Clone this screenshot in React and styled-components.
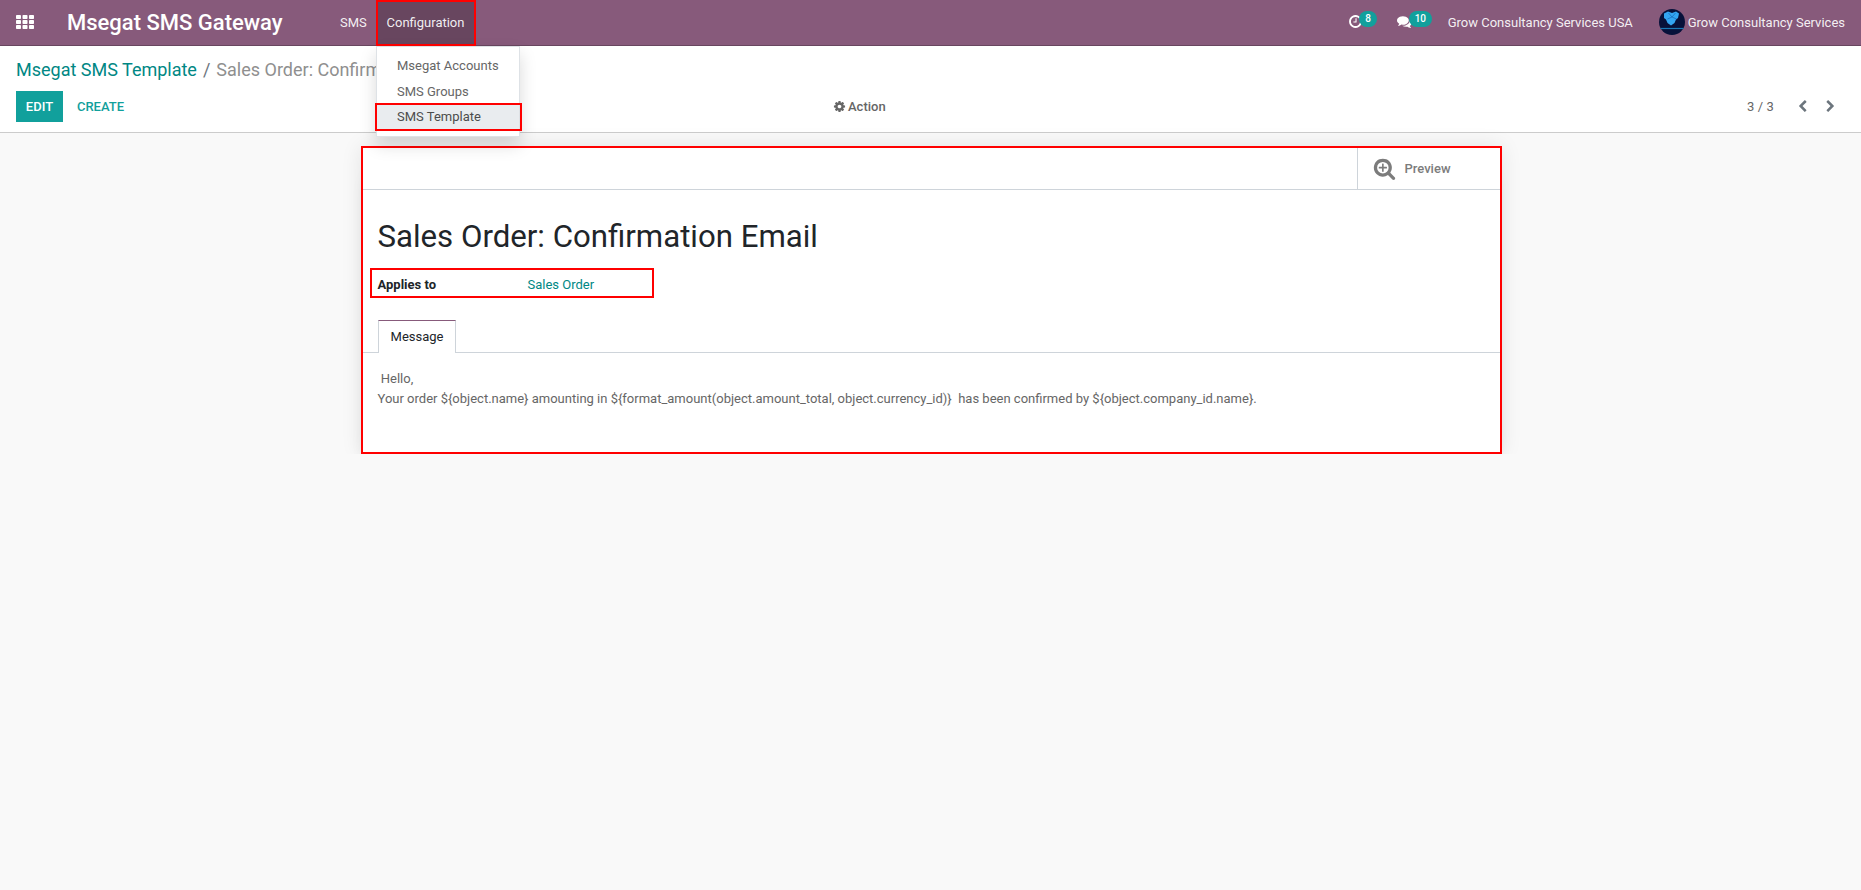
import React from "react";
import styled, { createGlobalStyle, css } from "styled-components";

const Global = createGlobalStyle`
  *, *::before, *::after { box-sizing: border-box; }
  body {
    margin: 0;
    background: #f9f9f9;
    font: 13px/19.5px Roboto, "Liberation Sans", sans-serif;
    color: #666;
  }
  h1 { margin: 0; }
`;

const frame = css`border: 2px solid #ff0000;`;

const Navbar = styled.header`
  display: flex;
  height: 46px;
  background: #875a7b;
  border-bottom: 1px solid #68465f;
  color: #fff;
  line-height: 45px;
  white-space: nowrap;
`;
const AppsIcon = styled.svg`
  margin: 15px 0 0 16px;
  width: 18px;
  height: 14px;
  fill: #fff;
`;
const Brand = styled.div`
  width: 261px;
  margin-left: 33px;
  font-size: 22px;
  font-weight: 500;
`;
const MenuLink = styled.div`
  width: 48px;
  padding-left: 12px;
  color: rgba(255, 255, 255, 0.92);
`;
const MenuHolder = styled.div`
  position: relative;
  width: 100px;
  height: 45px;
`;
const ActiveMenu = styled.div`
  ${frame}
  height: 46px;
  padding-left: 8.5px;
  line-height: 42px;
  background: #68465f;
  color: rgba(255, 255, 255, 0.92);
`;
const Dropdown = styled.ul`
  position: absolute;
  z-index: 2;
  top: 46px;
  left: 0;
  width: 144px;
  height: 91px;
  margin: 0;
  padding: 6px 0;
  list-style: none;
  background: #fff;
  border: 1px solid #dee2e6;
  box-shadow: 0 8px 16px rgba(0, 0, 0, 0.15);
`;
const DropdownItem = styled.li`
  position: relative;
  height: 25.5px;
  padding: 3px 20px;
  line-height: 19.5px;
  color: ${(p) => (p.$active ? "#4c4c4c" : "#666")};
  background: ${(p) => (p.$active ? "#e9ecef" : "transparent")};
  ${(p) =>
    p.$active &&
    css`
      &::after {
        content: "";
        ${frame}
        position: absolute;
        top: -1px;
        left: -2px;
        right: -3px;
        height: 28px;
      }
    `}
`;
const Systray = styled.div`
  display: flex;
  margin-left: auto;
  padding-right: 16px;
  color: rgba(255, 255, 255, 0.92);
`;
const Notice = styled.div`
  display: flex;
  width: ${(p) => p.$width}px;
  svg { margin-top: 14px; flex: none; color: #fff; }
`;
const Badge = styled.span`
  position: relative;
  height: 16px;
  margin: 11px 0 0 ${(p) => p.$overlap}px;
  padding: 0 6px;
  border-radius: 8px;
  background: #11a09c;
  color: #fff;
  font-size: 10px;
  font-weight: 500;
  line-height: 16px;
`;
const Company = styled.div`
  width: 211px;
`;
const Avatar = styled.svg`
  width: 26px;
  height: 26px;
  margin: 9px 3px 0 0;
`;

const ControlPanel = styled.section`
  height: 87px;
  padding: 13px 16px 0;
  background: #fff;
  border-bottom: 1px solid #ccc;
`;
const Breadcrumb = styled.nav`
  display: flex;
  gap: 6px;
  height: 32px;
  font-size: 18px;
  line-height: 22px;
  color: #6c757d;
  white-space: nowrap;
  a { color: #008784; }
  span { color: #8f8f8f; }
`;
const Toolbar = styled.div`
  display: grid;
  grid-template-columns: 817px 1fr auto;
  height: 31px;
  line-height: 31px;
`;
const Buttons = styled.div`
  display: flex;
`;
const Button = styled.button`
  height: 31px;
  width: ${(p) => (p.$primary ? "47px" : "75px")};
  padding: 0;
  border: 0;
  font: 500 13px/31px Roboto, sans-serif;
  background: ${(p) => (p.$primary ? "#11a09c" : "transparent")};
  color: ${(p) => (p.$primary ? "#fff" : "#11a09c")};
`;
const Action = styled.div`
  display: flex;
  align-items: center;
  gap: 2px;
  font-weight: 500;
`;
const Pager = styled.div`
  display: flex;
  align-items: center;
  padding-right: 8px;
  span { margin-right: 22px; letter-spacing: 0.1px; }
  svg + svg { margin-left: 15px; }
  svg { color: #6c757d; }
`;

const Sheet = styled.main`
  ${frame}
  width: 1141px;
  height: 308px;
  margin: 13px 0 0 361px;
  background: #fff;
  box-shadow: 0 20px 20px -15px rgba(0, 0, 0, 0.32), 0 0 20px rgba(0, 0, 0, 0.09);
`;
const ButtonBox = styled.div`
  display: flex;
  justify-content: flex-end;
  height: 42px;
  border-bottom: 1px solid #ced4da;
`;
const StatButton = styled.div`
  display: flex;
  align-items: center;
  width: 143px;
  padding-left: 15px;
  gap: 8.5px;
  border-left: 1px solid #ced4da;
  color: #7c7c7c;
  font-weight: 500;
`;
const Title = styled.h1`
  margin: 28px 0 0 14.5px;
  color: #212529;
  font-size: 31.2px;
  font-weight: 400;
  line-height: 38px;
`;
const Field = styled.div`
  ${frame}
  display: flex;
  width: 284px;
  height: 30px;
  margin: 12px 0 0 7px;
  padding: 1px 0 0 5.5px;
  line-height: 28px;
  color: #008784;
  b { width: 150px; color: #212529; font-weight: 700; }
`;
const Tabs = styled.div`
  display: flex;
  height: 33px;
  margin-top: 22px;
  padding-left: 15px;
  border-bottom: 1px solid #ced4da;
`;
const Tab = styled.div`
  width: 78px;
  height: 33px;
  border: 1px solid #ced4da;
  border-top-color: #875a7b;
  border-bottom: 0;
  background: #fff;
  color: #212529;
  line-height: 32px;
  text-align: center;
`;
const Message = styled.p`
  margin: 16px 14.5px 0;
  line-height: 20px;
  white-space: pre;
`;

const Icon = ({ d, size }) => (
  <svg width={size} height={size} viewBox="0 0 1792 1792" fill="currentColor">
    <path d={d} />
  </svg>
);

const clock =
  "M1024 544v448q0 14-9 23t-23 9h-320q-14 0-23-9t-9-23v-64q0-14 9-23t23-9h224v-352q0-14 9-23t23-9h64q14 0 23 9t9 23zm416 352q0-148-73-273t-198-198-273-73-273 73-198 198-73 273 73 273 198 198 273 73 273-73 198-198 73-273zm224 0q0 209-103 385.5t-279.5 279.5-385.5 103-385.5-103-279.5-279.5-103-385.5 103-385.5 279.5-279.5 385.5-103 385.5 103 279.5 279.5 103 385.5z";
const comments =
  "M1408 768q0 139-94 257t-256.5 186.5-353.5 68.5q-86 0-176-16-124 88-278 128-36 9-86 16h-3q-11 0-20.5-8t-11.5-21q-1-3-1-6.5t.5-6.5 2-6l2.5-5 3.5-5.5 4-5 4.5-5 4-4.5q5-6 23-25t26-29.5 22.5-29 25-38.5 20.5-44q-124-72-195-177t-71-224q0-139 94-257t256.5-186.5 353.5-68.5 353.5 68.5 256.5 186.5 94 257zm384 256q0 120-71 224.5t-195 176.5q10 24 20.5 44t25 38.5 22.5 29 26 29.5 23 25q1 1 4 4.5t4.5 5 4 5 3.5 5.5l2.5 5 2 6 .5 6.5-1 6.5q-3 14-13 22t-22 7q-50-7-86-16-154-40-278-128-90 16-176 16-271 0-472-132 58 4 88 4 161 0 309-45t264-129q125-92 192-212t67-254q0-77-23-152 129 71 204 178t75 230z";
const cog =
  "M1152 896q0-106-75-181t-181-75-181 75-75 181 75 181 181 75 181-75 75-181zm512-109v222q0 12-8 23t-20 13l-185 28q-19 54-39 91 35 50 107 138 10 12 10 25t-9 23q-27 37-99 108t-94 71q-12 0-26-9l-138-108q-44 23-91 38-16 136-29 186-7 28-36 28h-222q-14 0-24.5-8.5t-11.5-21.5l-28-184q-49-16-90-37l-141 107q-10 9-25 9-14 0-25-11-126-114-165-168-7-10-7-23 0-12 8-23 15-21 51-66.5t54-70.5q-27-50-41-99l-183-27q-13-2-21-12.5t-8-23.5v-222q0-12 8-23t19-13l186-28q14-46 39-92-40-57-107-138-10-12-10-24 0-10 9-23 26-36 98.5-107.5t94.5-71.5q13 0 26 10l138 107q44-23 91-38 16-136 29-186 7-28 36-28h222q14 0 24.5 8.5t11.5 21.5l28 184q49 16 90 37l142-107q9-9 24-9 13 0 25 10 129 119 165 170 7 8 7 22 0 12-8 23-15 21-51 66.5t-54 70.5q26 50 41 98l183 28q13 2 21 12.5t8 23.5z";
const searchPlus =
  "M1088 800v64q0 13-9.5 22.5t-22.5 9.5h-224v224q0 13-9.5 22.5t-22.5 9.5h-64q-13 0-22.5-9.5t-9.5-22.5v-224h-224q-13 0-22.5-9.5t-9.5-22.5v-64q0-13 9.5-22.5t22.5-9.5h224v-224q0-13 9.5-22.5t22.5-9.5h64q13 0 22.5 9.5t9.5 22.5v224h224q13 0 22.5 9.5t9.5 22.5zm128 32q0-185-131.5-316.5t-316.5-131.5-316.5 131.5-131.5 316.5 131.5 316.5 316.5 131.5 316.5-131.5 131.5-316.5zm512 832q0 53-37.5 90.5t-90.5 37.5q-54 0-90-38l-343-342q-179 124-399 124-143 0-273.5-55.5t-225-150-150-225-55.5-273.5 55.5-273.5 150-225 225-150 273.5-55.5 273.5 55.5 225 150 150 225 55.5 273.5q0 220-124 399l343 343q37 37 37 90z";
const chevronLeft =
  "M1427 301l-531 531 531 531q19 19 19 45t-19 45l-166 166q-19 19-45 19t-45-19l-742-742q-19-19-19-45t19-45l742-742q19-19 45-19t45 19l166 166q19 19 19 45t-19 45z";
const chevronRight =
  "M1363 877l-742 742q-19 19-45 19t-45-19l-166-166q-19-19-19-45t19-45l531-531-531-531q-19-19-19-45t19-45l166-166q19-19 45-19t45 19l742 742q19 19 19 45t-19 45z";

export default function App() {
  return (
    <>
      <Global />
      <Navbar>
        <AppsIcon viewBox="0 0 18 14">
          {[0, 5, 10].map((y) =>
            [0, 6.5, 13].map((x) => (
              <rect key={`${x}-${y}`} x={x} y={y} width="5" height="4" rx="0.8" />
            ))
          )}
        </AppsIcon>
        <Brand>Msegat SMS Gateway</Brand>
        <MenuLink>SMS</MenuLink>
        <MenuHolder>
          <ActiveMenu>Configuration</ActiveMenu>
          <Dropdown>
            <DropdownItem>Msegat Accounts</DropdownItem>
            <DropdownItem>SMS Groups</DropdownItem>
            <DropdownItem $active>SMS Template</DropdownItem>
          </Dropdown>
        </MenuHolder>
        <Systray>
          <Notice $width={48.5}>
            <Icon d={clock} size={15} />
            <Badge $overlap={-4}>8</Badge>
          </Notice>
          <Notice $width={51}>
            <Icon d={comments} size={15} />
            <Badge $overlap={-3}>10</Badge>
          </Notice>
          <Company>Grow Consultancy Services USA</Company>
          <Avatar viewBox="0 0 26 26">
            <circle cx="13" cy="13" r="13" fill="#07113a" />
            <path
              d="M5 4.5l4-2 4 1.5 4-1.5 3 2-1 4.5-2 1.5-1.5 3.5-3.5 2.5-3.5-2.5-1.5-3.5-2-1.5z"
              fill="#33a5f2"
            />
            <path d="M9.5 4l3.5 4 3.5-4M8.5 10l4.5-2 4.5 2" fill="none" stroke="#1668b8" strokeWidth=".7" />
            <path d="M1.5 19.5h23" stroke="#1a78b5" strokeWidth="1.2" />
          </Avatar>
          <div>Grow Consultancy Services</div>
        </Systray>
      </Navbar>
      <ControlPanel>
        <Breadcrumb>
          <a>Msegat SMS Template</a>/<span>Sales Order: Confirmation Email</span>
        </Breadcrumb>
        <Toolbar>
          <Buttons>
            <Button $primary>EDIT</Button>
            <Button>CREATE</Button>
          </Buttons>
          <Action>
            <Icon d={cog} size={13} />
            Action
          </Action>
          <Pager>
            <span>3 / 3</span>
            <Icon d={chevronLeft} size={13} />
            <Icon d={chevronRight} size={13} />
          </Pager>
        </Toolbar>
      </ControlPanel>
      <Sheet>
        <ButtonBox>
          <StatButton>
            <Icon d={searchPlus} size={23} />
            Preview
          </StatButton>
        </ButtonBox>
        <Title>Sales Order: Confirmation Email</Title>
        <Field>
          <b>Applies to</b>
          Sales Order
        </Field>
        <Tabs>
          <Tab>Message</Tab>
        </Tabs>
        <Message>
          {"\u00a0Hello,\nYour order ${object.name} amounting in ${format_amount(object.amount_total, object.currency_id)}\u00a0 has been confirmed by ${object.company_id.name}."}
        </Message>
      </Sheet>
    </>
  );
}
